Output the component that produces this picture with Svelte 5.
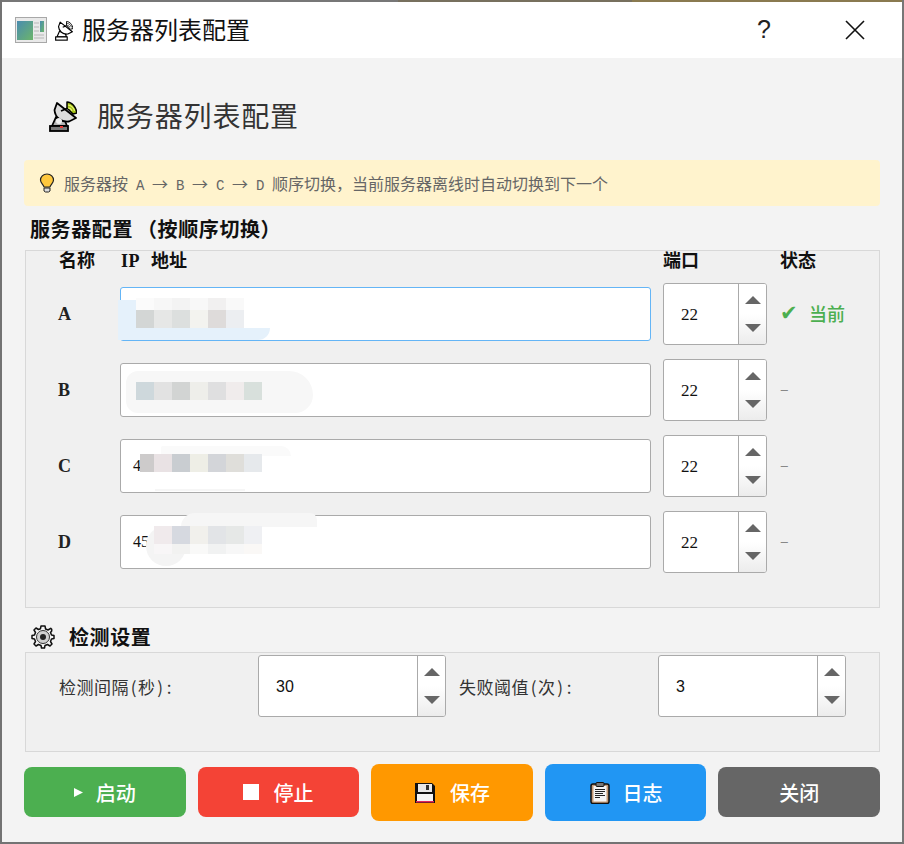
<script>
  const ipRows = [
    { name: 'A', value: '', focus: true, status: 'current', mosaic: [
      { x: 15, y: 10, w: 108, h: 12, colors: ['#fbfbfb','#f7f7f7','#f3f3f3','#f8f8f8','#f1f0f0','#f9f9f9'] },
      { x: 15, y: 22, w: 108, h: 18, colors: ['#d3d6d5','#e6e7e6','#dcdfde','#f3f3ef','#dedbda','#eceef1'] }
    ] },
    { name: 'B', value: '', status: 'none', mosaic: [
      { x: 15, y: 18, w: 126, h: 18, colors: ['#ced8dc','#e2e2e2','#d2d4d3','#eeeeea','#dfdfe0','#f0ecec','#d8e0dc'] }
    ] },
    { name: 'C', value: '4', status: 'none', mosaic: [
      { x: 19, y: 14, w: 122, h: 18, colors: ['#cdcbcb','#e9e2e4','#c9cdd1','#eeeee6','#d3d5d9','#dfdeda','#e6e9ec'] }
    ] },
    { name: 'D', value: '45', status: 'none', mosaic: [
      { x: 33, y: 10, w: 108, h: 18, colors: ['#f0eaec','#d6d9e0','#f1f0ec','#e2e4e7','#e6e8e7','#eff0f3'] },
      { x: 33, y: 28, w: 108, h: 10, colors: ['#f8f6f7','#f2f2f1','#f9f9f8','#f1f2f2','#f7f7f7','#faf8f6'] }
    ] }
  ];
</script>

{#snippet dish(small)}
  <svg class={small ? 'dish small' : 'dish'} viewBox="0 0 28 32">
    <path d="M7 17 L3 26 H18 L16 21 Z" fill={small ? '#fff' : '#b5b5b5'} stroke="#000" stroke-width="1.8" stroke-linejoin="round"/>
    <rect x="1" y="26" width="18" height="5" fill={small ? '#fff' : '#7c7c7c'} stroke="#000" stroke-width="1.8"/>
    <path d="M8 3 L27 18 L20 21.500 C12 22.500 6 17 5.500 10 Z" fill={small ? '#fff' : '#dcdcdc'} stroke="#000" stroke-width="1.8" stroke-linejoin="round"/>
    <path d="M12 11 L19 8" stroke="#000" stroke-width="1.800"/>
    {#if !small}
      <circle cx="10" cy="21" r="3" fill="#f0f0f0"/>
      <rect x="11" y="26" width="3" height="2" fill="#e53935"/>
    {/if}
    <path d="M18 2 C23 2 27 7 28 13 L24 14 L18 8 Z" fill={small ? '#fff' : '#a5c415'} stroke="#000" stroke-width="1.500" stroke-linejoin="round"/>
    <path d="M19 5 C22 5 25 8 25.500 11 M19 8 C21 8 22.500 9.500 23 11" fill="none" stroke={small ? '#000' : '#e8f27e'} stroke-width="1.100"/>
  </svg>
{/snippet}

{#snippet spin(value, wide)}
  <div class={wide ? 'spin wide' : 'spin'}>
    <span class={wide ? 'spin-value sans' : 'spin-value'}>{value}</span>
    <div class="spin-btns">
      <svg viewBox="0 0 16 8" class="tri"><path d="M0 8 L8 0 L16 8 Z"/></svg>
      <svg viewBox="0 0 16 8" class="tri"><path d="M0 0 H16 L8 8 Z"/></svg>
    </div>
  </div>
{/snippet}

<div class="window">
  <div class="strip"></div>
  <header class="titlebar">
    <svg class="appicon" viewBox="0 0 32 26">
      <rect x="0.5" y="0.5" width="31" height="25" fill="#e9e9e9" stroke="#a8a8a8"/>
      <defs><linearGradient id="g" x1="0" y1="0" x2="1" y2="1"><stop offset="0" stop-color="#4a8cb0"/><stop offset="1" stop-color="#6cb56a"/></linearGradient></defs>
      <rect x="2" y="4" width="16" height="19" fill="url(#g)"/>
      <rect x="25" y="4" width="4" height="11" fill="url(#g)"/>
      <path d="M19 6h5M19 10h5M19 14h5M19 18h10M19 21h10" stroke="#b8b8b8" stroke-width="1.2"/>
    </svg>
    {@render dish(true)}
    <span class="wintitle">服务器列表配置</span>
    <span class="help">?</span>
    <svg class="close" viewBox="0 0 20 20"><path d="M1 1 L19 19 M19 1 L1 19" stroke="#111" stroke-width="1.6"/></svg>
  </header>

  <main class="content">
    <div class="heading">
      {@render dish(false)}
      <h1>服务器列表配置</h1>
    </div>

    <div class="tip">
      <svg class="bulb" viewBox="0 0 16 20">
        <path d="M8 1 C4 1 1.500 4 1.500 7 C1.500 10 4.500 11.500 5 14 H11 C11.500 11.500 14.500 10 14.500 7 C14.500 4 12 1 8 1 Z" fill="#ffc83d" stroke="#222" stroke-width="1.200"/>
        <path d="M5 15 H11 V18 L9.500 19 H6.500 L5 18 Z" fill="#ddd" stroke="#222" stroke-width="1"/>
      </svg>
      <span>服务器按<span class="ltr">A</span><span class="arrow">→</span><span class="ltr">B</span><span class="arrow">→</span><span class="ltr">C</span><span class="arrow">→</span><span class="ltr">D</span>顺序切换，当前服务器离线时自动切换到下一个</span>
    </div>

    <h2 class="section first">服务器配置<span class="open">（</span>按顺序切换）</h2>
    <section class="box servers">
      <div class="grid">
        <div class="cell-head name">名称</div>
        <div class="cell-head ip"><span class="serif">IP</span>地址</div>
        <div class="cell-head port-head">端口</div>
        <div class="cell-head status-head">状态</div>
        {#each ipRows as row}
          <div class="row-name">{row.name}</div>
          <div class={row.focus ? 'ipinput focus' : 'ipinput'}>
            <span class="ipvalue">{row.value}</span>
            {#if row.name === 'A'}
              <i class="smear" style="left:-3px;top:12px;width:19px;height:40px;background:#e5f1fb"></i>
              <i class="smear" style="left:-3px;top:40px;width:152px;height:12px;background:#e5f1fb;border-radius:0 0 20px 0"></i>
            {:else if row.name === 'B'}
              <i class="smear" style="left:5px;top:7px;width:187px;height:42px;background:#f7f7f7;border-radius:20px 40px 30px 20px"></i>
            {:else if row.name === 'C'}
              <i class="smear" style="left:40px;top:6px;width:130px;height:10px;background:#fafafa;border-radius:8px 40px 0 0"></i>
              <i class="smear" style="left:34px;top:49px;width:90px;height:2px;background:#f6f6f6"></i>
            {:else}
              <i class="smear" style="left:60px;top:-3px;width:136px;height:14px;background:#f6f6f6;border-radius:60px 30px 0 0"></i>
              <i class="smear" style="left:25px;top:10px;width:40px;height:40px;background:#f4f4f4;border-radius:50%"></i>
            {/if}
            {#each row.mosaic as band}
              <div class="mosaic" style="left:{band.x}px;top:{band.y}px;width:{band.w}px;height:{band.h}px">
                {#each band.colors as c}<i style="background:{c}"></i>{/each}
              </div>
            {/each}
          </div>
          {@render spin('22', false)}
          {#if row.status === 'current'}
            <div class="status current"><span class="check">✔</span><span>当前</span></div>
          {:else}
            <div class="status none">–</div>
          {/if}
        {/each}
      </div>
    </section>

    <h2 class="section second">
      <svg class="gear" viewBox="0 0 24 24">
        <path d="M10 1 H14 L14.600 4 L17 5 L19.700 3.300 L20.700 4.300 L20.700 6 L19.500 7.500 L20.500 10 L23 10.500 V13.500 L20.500 14 L19.500 16.500 L21 19 L19 21 L16.500 19.500 L14 20.500 L13.500 23 H10.500 L10 20.500 L7.500 19.500 L5 21 L3 19 L4.500 16.500 L3.500 14 L1 13.500 V10.500 L3.500 10 L4.500 7.500 L3 5 L5 3 L7.500 4.500 L9.500 3.700 Z" fill="#f3f3f3" stroke="#111" stroke-width="1.500" stroke-linejoin="round"/>
        <circle cx="12" cy="12" r="6.500" fill="#d0d0d0" stroke="#333" stroke-width="1"/>
        <circle cx="12" cy="12" r="3" fill="#222"/>
      </svg>
      <span>检测设置</span>
    </h2>
    <section class="box settings">
      <span class="setlabel l1">检测间隔<span class="p">(</span>秒<span class="p">)</span><span class="p">:</span></span>
      {@render spin('30', true)}
      <span class="setlabel l2">失败阈值<span class="p">(</span>次<span class="p">)</span><span class="p">:</span></span>
      {@render spin('3', true)}
    </section>

    <div class="actions">
      <button class="btn green"><svg class="play" viewBox="0 0 10 10"><path d="M0 0 L10 5 L0 10 Z" fill="#fff"/></svg>启动</button>
      <button class="btn red"><span class="stop"></span>停止</button>
      <button class="btn orange tall">
        <svg class="ico" viewBox="0 0 22 22">
          <path d="M1 1 H18 L21 4 V21 H1 Z" fill="#111"/>
          <rect x="4" y="2" width="14" height="8" fill="#e8e8e8"/>
          <rect x="12" y="3" width="3" height="5" fill="#333"/>
          <rect x="3" y="12" width="16" height="7" fill="#f4f4f4"/>
          <rect x="2" y="19" width="18" height="1.500" fill="#e0245e"/>
        </svg>
        保存
      </button>
      <button class="btn blue tall">
        <svg class="ico" viewBox="0 0 20 22">
          <rect x="1" y="2" width="18" height="19.500" rx="2" fill="#c49a76" stroke="#111" stroke-width="1.500"/>
          <rect x="3.500" y="4" width="13" height="15.500" fill="#f5f5f5"/>
          <rect x="6" y="0.500" width="8" height="4" rx="1" fill="#777" stroke="#111"/>
          <path d="M5 7.500H15M5 9.500H15M5 11.500H13M5 13.500H15M5 15.500H10" stroke="#222" stroke-width="1"/>
        </svg>
        日志
      </button>
      <button class="btn gray">关闭</button>
    </div>
  </main>
</div>

<style>
  :global(body) { margin: 0; background: #777; }
  .window {
    width: 904px; height: 844px; box-sizing: border-box;
    display: flex; flex-direction: column;
    border-left: 2px solid #737373;
    border-bottom: 2px solid #737373;
    border-right: 2px solid #777;
    background: #f3f3f3;
    font-family: "Noto Sans CJK SC", "Liberation Sans", sans-serif;
    text-spacing-trim: space-all;
    color: #111;
    overflow: hidden;
  }
  .strip { height: 2px; flex: none; background: linear-gradient(90deg, #777 0 44%, #77705e 44% 70%, #8a7a50 70% 100%); }
  .titlebar { height: 56px; flex: none; background: #fff; display: flex; align-items: center; padding-left: 13px; }
  .appicon { width: 32px; height: 26px; margin-right: 8px; }
  .dish.small { width: 18px; height: 21px; margin: 0 9px 0 0; }
  .wintitle { font-size: 24px; flex: 1; line-height: 1; color: #111; margin-bottom: 3px; }
  .help { font-family: "Liberation Sans", sans-serif; font-size: 25px; width: 88px; color: #222; margin-bottom: 1px; }
  .close { width: 20px; height: 20px; margin-right: 37px; }

  .content { flex: 1; padding: 0 22px; display: flex; flex-direction: column; }
  .heading { height: 102px; flex: none; display: flex; align-items: flex-start; padding-left: 25px; }
  .dish { width: 28px; height: 32px; margin-top: 42px; }
  h1 { margin: 37px 0 0 20px; font-size: 28px; letter-spacing: .85px; font-weight: 400; line-height: 40px; color: #333; }

  .tip { height: 46px; flex: none; box-sizing: border-box; background: #fff3cd; border-radius: 4px; display: flex; align-items: center; padding-left: 15px; font-size: 16px; color: #666; white-space: nowrap; }
  .bulb { width: 16px; height: 20px; margin-right: 9px; }
  .ltr { display: inline-block; width: 8px; margin: 0 8px; text-align: center; font-family: "Liberation Mono", monospace; font-size: 14px; }
  .arrow { display: inline-block; width: 16px; text-align: center; }

  h2 { margin: 0; font-size: 20px; font-weight: 700; line-height: 28px; }
  .section.first { height: 44px; padding: 9px 0 0 6px; box-sizing: border-box; flex: none; letter-spacing: .6px; }
  .open { margin-left: 4px; }
  .box { background: #f0f0f0; border: 1px solid #d8d8d8; box-sizing: border-box; margin-left: 1px; flex: none; }
  .servers { height: 358px; }
  .grid {
    display: grid; grid-template-columns: 94px 531px 116px 1fr; grid-template-rows: 18px; grid-auto-rows: 62px;
    row-gap: 14px;
  }
  .cell-head { font-size: 18px; font-weight: 700; line-height: 20px; margin-top: -2px; }
  .cell-head.name { padding-left: 33px; }
  .cell-head.ip { margin-left: 1px; }
  .port-head { margin-left: 12px; }
  .serif { font-family: "Liberation Serif", serif; letter-spacing: .5px; display: inline-block; margin-right: 11px; }
  .status-head { margin-left: 13px; }
  .grid > .row-name { font-family: "Liberation Serif", serif; font-weight: 700; font-size: 18px; padding-left: 32px; align-self: center; color: #222; }
  .ipinput { position: relative; height: 54px; align-self: center; box-sizing: border-box; background: #fff; border: 1px solid #aaa; border-radius: 3px; display: flex; align-items: center; padding-left: 12px; font-family: "Liberation Serif", serif; font-size: 16px; }
  .ipinput.focus { border-color: #64b5f6; }
  .ipvalue { position: relative; }
  .smear { position: absolute; display: block; }
  .mosaic { position: absolute; display: flex; justify-content: flex-end; overflow: hidden; }
  .mosaic i { flex: none; width: 18px; display: block; }

  .spin { width: 104px; height: 62px; margin-left: 12px; box-sizing: border-box; border: 1px solid #aaa; border-radius: 3px; background: #fff; display: flex; overflow: hidden; }
  .spin.wide { width: 188px; margin-left: 0; }
  .spin-value { flex: 1; align-self: center; padding: 1px 0 0 17px; font-family: "Liberation Serif", serif; font-size: 17px; }
  .spin-value.sans { font-family: "Liberation Sans", sans-serif; font-size: 16px; }
  .spin-btns { width: 27px; flex: none; border-left: 1px solid #aaa; background: linear-gradient(#fff 0 50%, #ececec 100%); display: flex; flex-direction: column; align-items: center; justify-content: center; gap: 20px; }
  .tri { width: 16px; height: 8px; fill: #666; }

  .status { align-self: center; margin-left: 13px; }
  .current { color: #4caf50; font-size: 18px; font-weight: 500; display: flex; align-items: center; gap: 13px; margin-top: -2px; }
  .check { font-family: "DejaVu Sans", sans-serif; font-weight: 700; font-size: 21px; width: 16px; }
  .none { color: #888; font-size: 16px; margin-top: -5px; }

  .section.second { height: 44px; flex: none; display: flex; align-items: center; padding: 14px 0 0 7px; box-sizing: border-box; letter-spacing: .6px; }
  .gear { width: 24px; height: 24px; margin-right: 14px; }
  .settings { height: 100px; display: grid; grid-template-columns: 232px 201px 199px 188px; align-content: start; padding-top: 2px; }
  .setlabel { font-size: 17px; letter-spacing: .5px; color: #333; padding-left: 33px; align-self: center; white-space: nowrap; }
  .setlabel.l2 { padding-left: 0; }
  .p { display: inline-block; width: 9px; text-align: center; letter-spacing: 0; }

  .actions { display: flex; gap: 12px; align-items: flex-start; height: 57px; margin-top: 12px; flex: none; }
  .btn { flex: 1; height: 50px; margin-top: 3px; border: 0; border-radius: 8px; color: #fff; font-family: inherit; font-size: 20px; font-weight: 500; letter-spacing: 0; display: flex; align-items: center; justify-content: center; padding: 0; }
  .btn.tall { height: 57px; margin-top: 0; }
  .green { background: #4caf50; }
  .red { background: #f44336; }
  .orange { background: #ff9800; }
  .blue { background: #2196f3; }
  .gray { background: #666; }
  .play { width: 9px; height: 9px; margin-right: 13px; }
  .stop { width: 16px; height: 16px; background: #fff; margin-right: 14px; }
  .ico { width: 22px; height: 22px; margin-right: 14px; }
  .blue .ico { margin-right: 12px; }
</style>
